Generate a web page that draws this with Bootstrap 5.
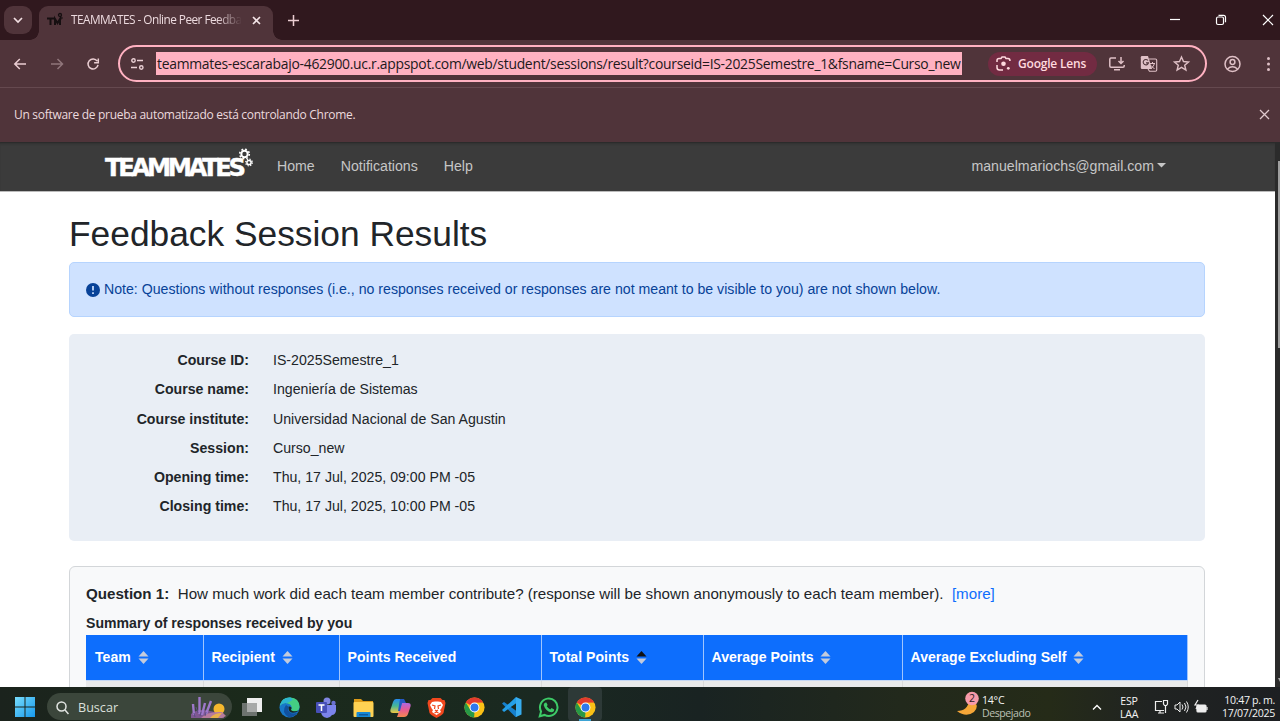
<!DOCTYPE html>
<html lang="es">
<head>
<meta charset="utf-8">
<title>TEAMMATES - Online Peer Feedback</title>
<link rel="stylesheet" href="https://cdn.jsdelivr.net/npm/bootstrap@5.3.0/dist/css/bootstrap.min.css">
<style>
body{width:1280px;height:721px;overflow:hidden;font-family:"Liberation Sans",Arial,sans-serif;font-size:14.15px;background:#fff}
svg{display:block;flex:none}
.ui{font-family:"Open Sans","Noto Sans",sans-serif;white-space:nowrap}
.tabstrip{height:40px;background:#30181e;padding-left:4px}
.tabsearch{width:28px;height:28px;border-radius:9px;background:#50343a;margin-top:6px}
.tab-on{position:relative;width:234px;height:34px;margin:6px 0 0 7px;border-radius:9px 9px 0 0;background:#50343a;padding:0 12px 6px 8px;color:#ecdade}
.tab-on::before,.tab-on::after{content:"";position:absolute;bottom:0;width:9px;height:9px}
.tab-on::before{left:-9px;background:radial-gradient(circle at 0 0,transparent 8.5px,#50343a 9px)}
.tab-on::after{right:-9px;background:radial-gradient(circle at 100% 0,transparent 8.5px,#50343a 9px)}
.tab-label{font-size:11.8px;letter-spacing:-.53px;-webkit-mask-image:linear-gradient(90deg,#000 146px,transparent 171px)}
.toolbar{height:48px;background:#50343a;border-bottom:1px solid #65494f;color:#e5c8cd}
.omni{width:1089px;height:37px;border:2px solid #ffb1c1;border-radius:19px;padding-left:11px}
.url{height:23px;line-height:24px;background:#ffb1c1;color:#22191b;font-size:13.9px;letter-spacing:-.275px;width:806px;margin-left:12px;padding-left:1px}
.lens{width:109px;height:24px;border-radius:12px;background:#722b42;color:#ffd9df;font-size:12px;letter-spacing:-.2px;font-weight:600;padding-left:8px}
.infobar{height:54px;background:#50343a;color:#ecdade;font-size:12px;letter-spacing:-.29px;padding:0 10px 0 14px}
.site{height:545px;overflow:hidden}
.sitenav{height:50px;background:#3b3b3b;color:#c6c6c6;border-bottom:1px solid #bbb;box-shadow:inset 0 3px 3px -2px #252525;padding-left:105px}
.brandmark{overflow:visible;margin-top:-9px}
.brandmark text{font-family:"DejaVu Sans",sans-serif;font-weight:700;font-size:24.3px;fill:#fff;stroke:#fff;stroke-width:.4px}
.scroller{width:5px;background:#2b2b2b;padding-top:19px}
.thumb{width:2px;margin-left:3px;height:187px;background:#9f9f9f}
.pagebody{margin-left:69px;width:1136px}
h1.title{font-size:35.35px;line-height:43px;margin:20px 0 7px;color:#212529;height:43px}
.note{height:55px;background:#cfe2ff;border:1px solid #b6d4fe;border-radius:5px;color:#084298;padding:0 16px;gap:4px;margin-bottom:17px}
.infobox{height:207px;background:#e9eef5;border-radius:5px;padding-top:12px;margin-bottom:25px}
.inforow{height:29.25px;line-height:29.25px}
.inforow b{width:180px;text-align:right;margin-right:24px}
.question{height:140px;background:#f8f9fa;border:1px solid #d3d6d9;border-radius:6px;padding:15px 16px 0}
.qtext{font-size:15.15px;line-height:23px;height:23px;white-space:pre}
.sumtitle{line-height:20px;margin-top:8px;height:21px;font-size:14.1px;font-weight:bold}
.results{width:1102px;table-layout:fixed;color:#fff;font-size:14.08px;font-weight:bold;margin:1px 0 0}
.results th{background:#0d6efd;height:45px;padding:0 0 0 8px;border-right:1px solid #9fc5fe;border-bottom:1px solid #c4d7f4}
.results th:first-child{padding-left:9px}
.results th svg{display:inline-block;margin-left:7px;vertical-align:-2px}
.results td{background:#e9eaeb;height:20px;border-right:1px solid #d9dadb}
.taskbar{height:34px;background:linear-gradient(90deg,#1b231d 0,#1b2a1b 260px,#1a2921 540px,#192322 700px,#22291c 900px,#252b18 1050px,#202322 1150px,#1d1f22 1280px);color:#f3f3f3;padding-left:15px}
.tsearch{width:185px;height:27px;background:#3b463b;border-radius:14px;padding:0 4px 0 9px;margin-left:12px;font-size:12.6px;color:#dce0dc}
.apps{margin-left:10px;gap:15.5px}
.slot{width:21.5px;height:27px}
.active-app{width:34px;height:34px;background:#2d3937;border-radius:4px;margin-left:-7px;position:relative}
.active-app::after{content:"";position:absolute;left:11px;bottom:0;width:12px;height:2px;background:#3da3d4}
.tiny{font-size:10.6px;line-height:13px;letter-spacing:-.25px}
</style>
</head>
<body class="d-flex flex-column">
<svg width="0" height="0" class="position-absolute">
<defs>
<g id="chrome"><circle cx="12" cy="12" r="11.5" fill="#fbc116"/><path d="M12 12 2 6.300A11.500 11.500 0 0 1 22 6.300L12 6.500z" fill="#e33b2e"/><path d="M2 6.300 7.200 14.700 12 17.400 11.500 23.500A11.500 11.500 0 0 1 2 6.300z" fill="#279847"/><circle cx="12" cy="12" r="5.600" fill="#fff"/><circle cx="12" cy="12" r="4.500" fill="#2f78ec"/></g>
<g id="sort"><path d="M5.500 0 10.500 5.500H.5z"/><path d="M.5 7.500H10.500L5.500 13z"/></g>
</defs></svg>

<div class="tabstrip ui d-flex">
  <div class="tabsearch d-flex align-items-center justify-content-center"><svg width="10" height="8" fill="none" stroke="#f2dfe2" stroke-width="1.7"><path d="M1 2l4 4 4-4"/></svg></div>
  <div class="tab-on d-flex align-items-center">
    <svg width="17" height="16" style="margin-right:7px" fill="none" stroke="#160f11"><path stroke-width="2" d="M0 6.500h7M3.500 6.500V13M8 13V7l2.500 4L13 7v6"/><circle cx="13" cy="3" r="1.500" stroke-width="1.300"/><circle cx="14.500" cy="6" r=".8"/></svg>
    <div class="tab-label">TEAMMATES - Online Peer Feedba</div>
    <svg width="9" height="9" class="ms-auto" fill="none" stroke="#f4e4e7" stroke-width="1.600"><path d="M1 1l7 7M8 1 1 8"/></svg>
  </div>
  <svg width="11" height="11" style="margin:15px 0 0 15px" stroke="#ebcdd2" stroke-width="1.500"><path d="M5.500 0v11M0 5.500h11"/></svg>
  <svg width="110" height="14" class="ms-auto" style="margin-top:13px" fill="none" stroke="#fff" stroke-width="1.200"><path d="M0 6.500h10" /><rect x="46.500" y="4" width="7" height="7.500" rx="1.500"/><path d="M48.500 2.300h5q2 0 2 2v5"/><path d="M93 2l10 10M103 2 93 12"/></svg>
</div>

<div class="toolbar ui d-flex align-items-center">
  <svg width="118" height="20" fill="none" stroke="#eacdd2" stroke-width="1.500"><path d="M26 10H14.800M19.800 5l-5 5 5 5"/><path stroke="#90767b" d="M51 10h11.500M57.500 5l5 5-5 5"/><path d="M97.200 7.200A5 5 0 1 0 98 10.800M98.300 4.500v4.200h-4.200"/></svg>
  <div class="omni d-flex align-items-center">
    <svg width="13" height="12" fill="none" stroke="#ebd0d5" stroke-width="1.400"><circle cx="2.500" cy="2.500" r="1.700"/><path d="M6 2.500h6M0 9.500h6"/><circle cx="10.300" cy="9.500" r="1.700"/></svg>
    <div class="url">teammates-escarabajo-462900.uc.r.appspot.com/web/student/sessions/result?courseid=IS-2025Semestre_1&amp;fsname=Curso_new</div>
    <div class="lens d-flex align-items-center" style="margin-left:26px">
      <svg width="15" height="15" style="margin-right:7px" fill="none" stroke="#ffd9df" stroke-width="1.500"><path d="M1 6V4.500Q1 2.500 3 2.500H5L6 1H9L10 2.500H12Q14 2.500 14 5M1 9v2.500Q1 14 3.500 14H7"/><circle cx="7.500" cy="7.800" r="2.300" fill="#ffd9df" stroke="none"/><circle cx="12.300" cy="12.300" r="1.400" fill="#ffd9df" stroke="none"/></svg><span>Google Lens</span>
    </div>
    <svg width="90" height="20" style="margin-left:11px" fill="none" stroke="#dfc0c6" stroke-width="1.500"><path d="M8 4H3Q1.800 4 1.800 5.200V12Q1.800 13.200 3 13.200H15Q16.200 13.200 16.200 12V11M13 3v6M10.500 7 13 9.500 15.500 7M6 15.700h6"/><path d="M34 2h6l4 13H34q-1.200 0-1.200-1.200V3.200Q32.800 2 34 2z" fill="#dfc0c6" stroke="none"/><path d="M41 5h6.500q1.200 0 1.200 1.200V16q0 1.200-1.200 1.200H41.500L40 15" stroke-width="1.100"/><path d="M40 6.500a2.700 2.700 0 1 0 .5 2.400H38" stroke="#50343a" stroke-width="1.100"/><path d="M42 9.500h5M44.500 8v1.500M46.500 9.500q-1 3.500-3.500 5M43 11.500l3.500 3.500" stroke-width="1"/><path d="M73.500 3l2 4.500 5 .5-3.800 3.200 1.200 4.800-4.400-2.600L69.100 16l1.200-4.800L66.500 8l5-.5z" stroke-width="1.400"/></svg>
  </div>
  <svg width="56" height="20" style="margin-left:17px" fill="none" stroke="#dfc0c6" stroke-width="1.500"><circle cx="8.500" cy="10" r="7.500"/><circle cx="8.500" cy="8" r="2.400"/><path d="M3.500 15q5-4.500 10 0"/><g fill="#dfc0c6" stroke="none"><circle cx="44.500" cy="4.500" r="1.500"/><circle cx="44.500" cy="10" r="1.500"/><circle cx="44.500" cy="15.500" r="1.500"/></g></svg>
</div>

<div class="infobar ui d-flex align-items-center"><span>Un software de prueba automatizado está controlando Chrome.</span><svg width="11" height="12" class="ms-auto" stroke="#dfc9cd" stroke-width="1.300"><path d="M1 1l9 9M10 1 1 10"/></svg></div>

<div class="site d-flex">
  <div class="flex-grow-1">
    <nav class="sitenav d-flex align-items-center">
      <svg class="brandmark" width="150" height="34"><text x="0" y="31" textLength="141" lengthAdjust="spacing">TEAMMATES</text><g fill="none" stroke="#fff"><circle cx="139.500" cy="9" r="3.200" stroke-width="2"/><circle cx="139.500" cy="9" r="4.800" stroke-width="1.600" stroke-dasharray="1.885 1.885"/><circle cx="144" cy="17.500" r="2.100" stroke-width="1.500"/><circle cx="144" cy="17.500" r="3.300" stroke-width="1.300" stroke-dasharray="1.300 1.300"/></g></svg>
      <span style="margin-left:22px">Home</span><span style="margin-left:26px">Notifications</span><span style="margin-left:26px">Help</span>
      <span class="ms-auto">manuelmariochs@gmail.com</span><svg width="9" height="5" style="margin:-2px 109px 0 3px" fill="#c6c6c6"><path d="M0 0h9L4.500 4.500z"/></svg>
    </nav>
    <main class="pagebody">
      <h1 class="title">Feedback Session Results</h1>
      <div class="note d-flex align-items-center"><svg width="14" height="14" viewBox="0 0 14 14"><circle cx="7" cy="7" r="7" fill="#084298"/><path d="M7 3v4.500M7 9.200v1.800" stroke="#cfe2ff" stroke-width="1.700"/></svg><span>Note: Questions without responses (i.e., no responses received or responses are not meant to be visible to you) are not shown below.</span></div>
      <section class="infobox">
        <div class="inforow d-flex"><b>Course ID:</b><span>IS-2025Semestre_1</span></div>
        <div class="inforow d-flex"><b>Course name:</b><span>Ingeniería de Sistemas</span></div>
        <div class="inforow d-flex"><b>Course institute:</b><span>Universidad Nacional de San Agustin</span></div>
        <div class="inforow d-flex"><b>Session:</b><span>Curso_new</span></div>
        <div class="inforow d-flex"><b>Opening time:</b><span>Thu, 17 Jul, 2025, 09:00 PM -05</span></div>
        <div class="inforow d-flex"><b>Closing time:</b><span>Thu, 17 Jul, 2025, 10:00 PM -05</span></div>
      </section>
      <section class="question">
        <div class="qtext"><b>Question 1:</b>  How much work did each team member contribute? (response will be shown anonymously to each team member).  <span class="text-primary">[more]</span></div>
        <div class="sumtitle">Summary of responses received by you</div>
        <table class="results">
          <colgroup><col style="width:117px"><col style="width:136px"><col style="width:202px"><col style="width:162px"><col style="width:199px"><col></colgroup>
          <tr><th>Team<svg width="11" height="13" fill="#c3cbdc"><use href="#sort"/></svg></th><th>Recipient<svg width="11" height="13" fill="#c3cbdc"><use href="#sort"/></svg></th><th>Points Received</th><th>Total Points<svg width="11" height="13" fill="#c3cbdc"><path d="M5.500 0 10.500 5.500H.5z" fill="#111"/><path d="M.5 7.500H10.500L5.500 13z"/></svg></th><th>Average Points<svg width="11" height="13" fill="#c3cbdc"><use href="#sort"/></svg></th><th>Average Excluding Self<svg width="11" height="13" fill="#c3cbdc"><use href="#sort"/></svg></th></tr>
          <tr><td></td><td></td><td></td><td></td><td></td><td></td></tr>
        </table>
      </section>
    </main>
  </div>
  <div class="scroller d-flex flex-column"><div class="thumb"></div><svg class="mt-auto mb-1" width="5" height="6" fill="#aaa"><path d="M3 1h4L5 5z"/></svg></div>
</div>

<div class="taskbar ui d-flex align-items-center">
  <svg width="20" height="20" style="margin-top:6px"><defs><linearGradient id="w" x1="0" y1="0" x2="1" y2="1"><stop stop-color="#78dcfc"/><stop offset="1" stop-color="#1698ec"/></linearGradient></defs><path fill="url(#w)" d="M0 0h9.500v9.500H0zM10.500 0H20v9.500h-9.500zM0 10.500h9.500V20H0zM10.500 10.500H20V20h-9.500z"/></svg>
  <div class="tsearch d-flex align-items-center mt-auto" style="margin-bottom:1px">
    <svg width="13" height="14" style="margin-top:2px" fill="none" stroke="#e2e5e2" stroke-width="1.500"><circle cx="5.500" cy="5.500" r="4.500"/><path d="M9 9l3.500 4"/></svg><span style="margin:3px 0 0 9px">Buscar</span>
    <svg width="38" height="23" class="ms-auto"><path d="M1 19q10-9 33 2v2H1z" fill="#7e5791"/><circle cx="29" cy="14" r="5.500" fill="#f5b82e"/><path d="M11 23q6-7 21-6l4 4-4 2z" fill="#b77b9c"/><path d="M20 23q4-5 12-5l-4 5z" fill="#e8b14b"/><g fill="none" stroke="#9d78c9" stroke-width="2.400"><path d="M3 9l1 11M9.500 2v17M15 8l-3 12M21 6l-5 13"/></g><path d="M5 22l-1-4M10 21l1-4M15 21l1-4M6 12l2 6" stroke="#5b4d86"/></svg>
  </div>
  <div class="apps d-flex align-items-center">
    <div class="slot d-flex align-items-end"><svg width="22" height="20"><path fill="#eee" d="M5 0h15v14H5z"/><path fill="#777b79" fill-opacity=".9" d="M0 5h15v13H0z"/><path fill="#a7a9a8" d="M5 5h10v9H5z"/></svg></div>
    <div class="slot d-flex align-items-end"><svg width="21" height="21" viewBox="0 0 24 24"><circle cx="12" cy="12" r="11.500" fill="#1878c8"/><path d="M1 10Q3 0 13 .5 23 1 23.500 11q-.5 6-8 5.500-3-1-1-3Q15 8 9 7 4 6 1 10z" fill="#44ce83"/><path d="M1 10Q3 .5 13 .5L16 3 9 7Q4 6 1 10z" fill="#2cb5d0"/><path d="M8 9q-6 8 3 14 6 .5 10-5-6 2-9-1-3-3-1-6z" fill="#11519e"/><path d="M11 11q-1 6 5 7 4 0 6-2l1-1q-3 2-7.500 1-3-1-1-3.500-1-2.500-3.500-1.500z" fill="#172722"/></svg></div>
    <div class="slot d-flex align-items-end"><svg width="21" height="21"><circle cx="11" cy="4" r="3.500" fill="#8186e2"/><circle cx="17.500" cy="6" r="2.200" fill="#6b70d0"/><path d="M7 8h13v6q-1 4-4 4-2 3-5 3-6-1-6-7z" fill="#7b83eb"/><rect y="5" width="11" height="11" rx="1" fill="#474fb8"/><path d="M2.500 8h6M5.500 8v6" stroke="#fff" stroke-width="1.500"/></svg></div>
    <div class="slot d-flex align-items-end"><svg width="21" height="20"><path d="M1 1h7l2 2h10v4H1z" fill="#dd9b18"/><path d="M.500 5q0-1 1-1h18q1 0 1 1v13q0 1-1 1H1.500q-1 0-1-1z" fill="#ffd253"/><path d="M3.500 19v-4q0-1 1-1h12q1 0 1 1v4z" fill="#1689d5"/><path d="M6 16h9v1.500H6z" fill="#105a9c"/></svg></div>
    <div class="slot d-flex align-items-end"><svg width="21" height="20"><defs><linearGradient id="cp" x2="0" y2="1"><stop stop-color="#258bf0"/><stop offset=".5" stop-color="#47b894"/><stop offset="1" stop-color="#f1c744"/></linearGradient><linearGradient id="cq" x2="0" y2="1"><stop stop-color="#ae67e0"/><stop offset=".5" stop-color="#e85b91"/><stop offset="1" stop-color="#f5894f"/></linearGradient></defs><path d="M6 1h8l-4 14H3q-4 0-2-5l2-6q1-3 3-3z" fill="url(#cp)"/><path d="M12 5h6q4 0 2 5l-2 6q-1 3-4 3H7z" fill="url(#cq)"/><path d="M10 1h4l2 4h-4l-2 8H8z" fill="#2458c4"/></svg></div>
    <div class="slot d-flex align-items-end"><svg width="20" height="21"><path d="M5.500 1h8l2 2h2l1 3-2 10q-1 2-7 5-6-3-7-5L.500 6l1-3h2z" fill="#f1481e"/><path d="M5 5l3-.5h3l3 .5 2 3-2 4-1 1 1 2-4.500 3L5 15l1-2-1-1-2-4z" fill="#fff"/><path d="M5 8l3 1-.5 3M14 8l-3 1 .5 3M8 13l1.500 1 1.500-1M7.500 16l2-1 2 1" stroke="#f1481e" fill="none" stroke-width="1.200"/></svg></div>
    <div class="slot d-flex align-items-end"><svg width="21" height="21" viewBox="0 0 24 24"><use href="#chrome"/></svg></div>
    <div class="slot d-flex align-items-end"><svg width="21" height="21"><path d="M1 6.500 3 5l12.500 9V20L14.500 20z" fill="#1680cd"/><path d="M15 0 1 13l2 2L15.500 6z" fill="#239fe8"/><path d="M15 0l5.500 2.500v15L15 20z" fill="#37adf0"/></svg></div>
    <div class="slot d-flex align-items-end"><svg width="21" height="21" viewBox="0 0 24 24"><path d="M2 22l1.500-5.500A10 10 0 1 1 7.500 20.500z" fill="none" stroke="#3dca67" stroke-width="2.300"/><path d="M8 6.500l1.500-.3 1.500 3-1 1.500q1.500 2.500 4 3.500l1.500-1.500 3 1.500q0 3-3 3.300Q9 17 6.500 9.500q0-2 1.500-3z" fill="#3dca67"/></svg></div>
    <div class="active-app d-flex justify-content-center align-items-center"><svg width="21" height="21" viewBox="0 0 24 24" style="margin-top:6px"><use href="#chrome"/></svg></div>
  </div>
  <div class="ms-auto d-flex align-items-center h-100">
    <svg width="24" height="28"><path d="M16 9q7 7 1 13-8 6-17-1 11 0 12-11z" fill="#f4a638"/><circle cx="15" cy="8.500" r="6.800" fill="#f69aaa"/><text x="12" y="12.300" font-family="Open Sans" font-size="10.500" fill="#2c1a1e">2</text></svg>
    <div class="tiny" style="width:82px;margin:6px 0 0 1px">14°C<br><span style="color:#bcc0b4;letter-spacing:-.45px">Despejado</span></div>
    <svg width="10" height="7" style="margin:7px 0 0 28px" fill="none" stroke="#fff" stroke-width="1.300"><path d="M1 5.500l4-4 4 4"/></svg>
    <div class="tiny text-center" style="width:26px;margin:7px 0 0 14px">ESP<br>LAA</div>
    <svg width="55" height="16" style="margin:6px 0 0 12px" fill="none" stroke="#eee" stroke-width="1.200"><path d="M8 2.500H1.500v9H10M4 14h6M6 11.500V14M9.500 1.500h4V5l-1 1.500h-2L9.500 5zM11.500 7v7"/><path d="M21 6h2l3-3v10l-3-3h-2zM28 5.500q2 2.500 0 5M30.500 4q3 4 0 8M32.500 2.500q3.500 5.500 0 11" stroke-width="1"/><rect x="43" y="6" width="9" height="7" rx="1" fill="#eee"/><path d="M53 8v3M44 1l-3 5h3l-2 4"/></svg>
    <div class="tiny text-end" style="width:60px;margin:6px 5px 0 6px;letter-spacing:-.33px">10:47 p. m.<br>17/07/2025</div>
  </div>
</div>
<script src="https://cdn.jsdelivr.net/npm/bootstrap@5.3.0/dist/js/bootstrap.bundle.min.js"></script>
</body>
</html>
